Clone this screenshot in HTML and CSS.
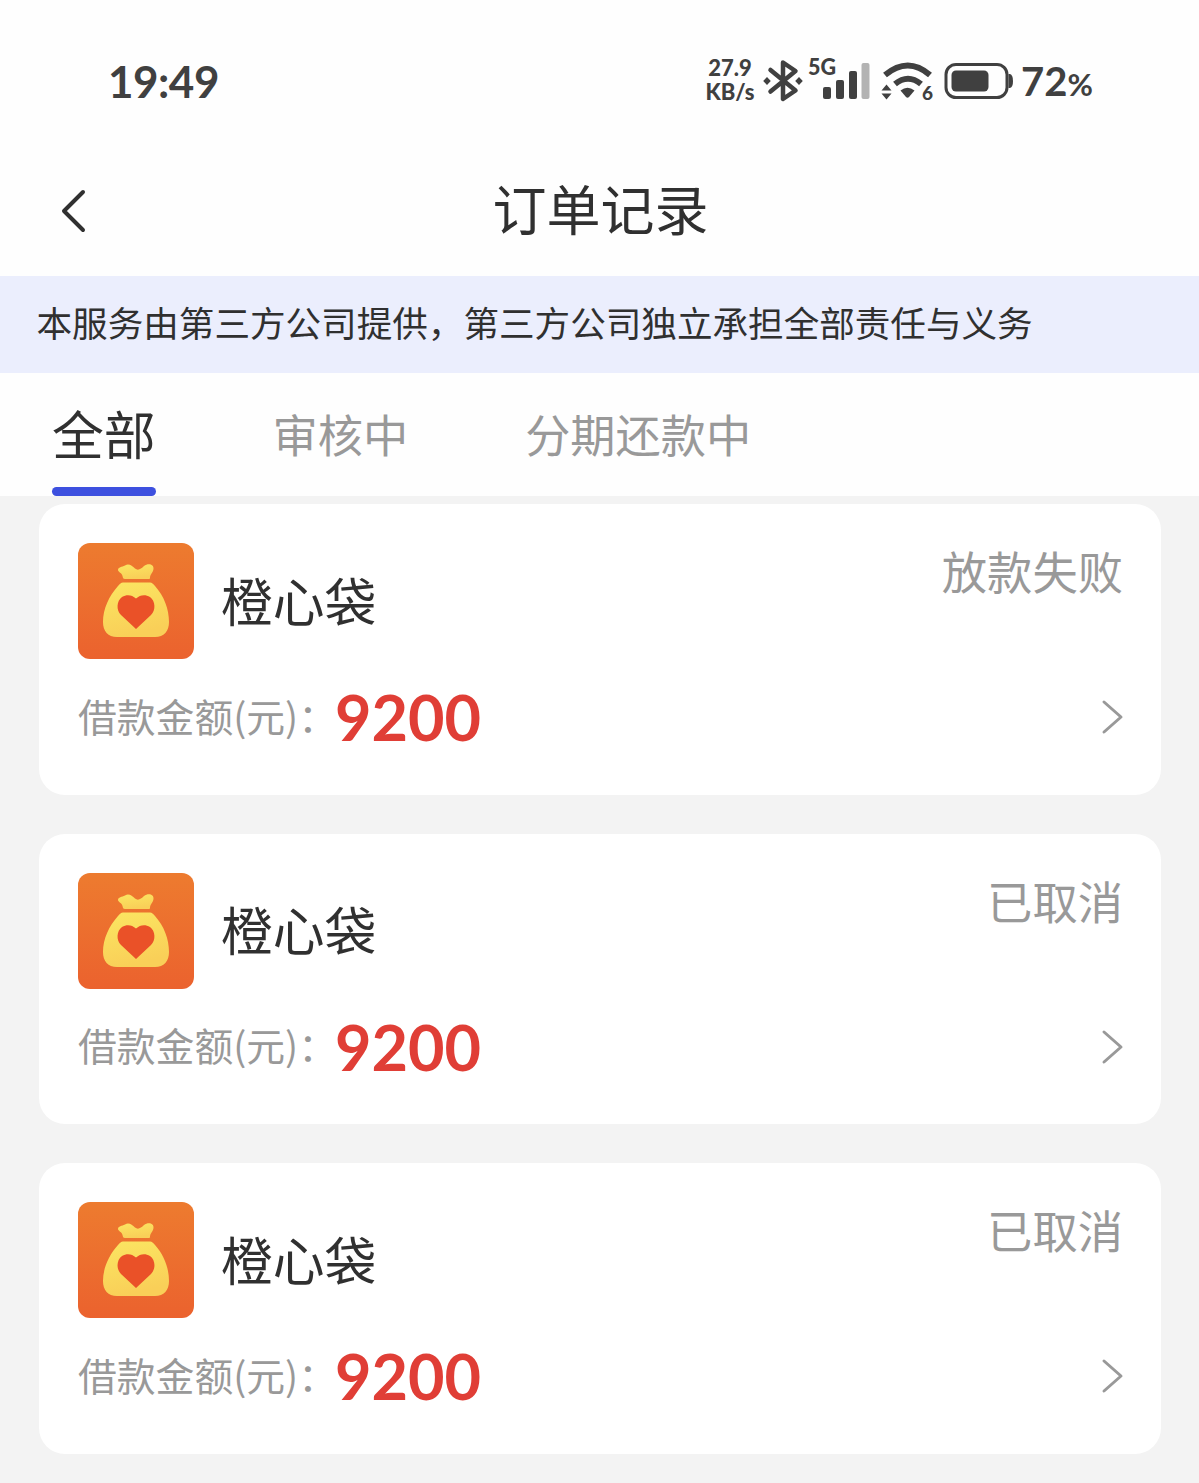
FILE: index.html
```html
<!DOCTYPE html>
<html lang="zh-CN">
<head>
  <meta charset="UTF-8">
  <meta name="viewport" content="width=device-width, initial-scale=1.0">
  <title>订单记录</title>
  <link rel="stylesheet" href="styles.css">
</head>
<body>

<!-- shared icons -->
<svg class="defs" width="0" height="0">
  <defs>
    <linearGradient id="bg" x1="0" y1="0" x2="0" y2="1">
      <stop offset="0" stop-color="#ed7b2f"/>
      <stop offset="1" stop-color="#eb622e"/>
    </linearGradient>
    <linearGradient id="gold" x1="0" y1="0" x2="0.3" y2="1">
      <stop offset="0" stop-color="#fbe662"/>
      <stop offset="1" stop-color="#f9cf58"/>
    </linearGradient>
  </defs>
  <symbol id="bag" viewBox="0 0 116 116">
    <rect width="116" height="116" rx="12" fill="url(#bg)"/>
    <path d="M40 27 C40 24 44 24 47 22.500 C51 20 54 23 57 25.500 C60 28 63 26 66 23 C70 20 76 21 75.500 26 C75 30 72 31 72 35 C72 36 71 36 70 36 H47 C45 36 45 35 44.500 33 C44 30 40 29 40 27Z" fill="url(#gold)"/>
    <path d="M45 39.500 H72 C74 39.500 75 41 77 43 C86 53 91 66 91 79 C91 88 86 94 77 94 H39 C30 94 25 88 25 79 C25 66 31 53 40 43 C42 41 43 39.500 45 39.500Z" fill="url(#gold)"/>
    <path d="M58 86 L43 72 C38 67 38.500 58 44 54 C49 51 54 52 58 55.500 C62 52 67 51 72 54 C77.500 58 78 67 73 72Z" fill="#ea5128"/>
  </symbol>
  <symbol id="arrow" viewBox="0 0 24 36">
    <path d="M4 3 L21 18 L4 33" fill="none" stroke="#999" stroke-width="3" stroke-linecap="round" stroke-linejoin="round"/>
  </symbol>
</svg>

<div class="status-bar">
  <span class="time">19:49</span>
  <div class="status-icons">
    <div class="speed"><span>27.9</span><span>KB/s</span></div>
    <svg class="bluetooth" width="40" height="44" viewBox="0 0 40 44" fill="none" stroke="#404040" stroke-width="4.500" stroke-linejoin="round" stroke-linecap="round">
      <path d="M7.500 11 L32.500 31.500 L20 40 V3.500 L32.500 12 L7.500 32.500"/>
      <path d="M4 18 L7.800 22 L4 26 L0.200 22Z M36 18 L39.800 22 L36 26 L32.200 22Z" fill="#404040" stroke="none"/>
    </svg>
    <svg class="signal" width="64" height="44" viewBox="0 0 64 44" fill="#404040">
      <text x="1" y="16" textLength="28" lengthAdjust="spacingAndGlyphs">5G</text>
      <rect x="16" y="28" width="8" height="12" rx="2"/>
      <rect x="29" y="21" width="8" height="19" rx="2"/>
      <rect x="42" y="12" width="8" height="28" rx="2"/>
      <rect x="54.500" y="4" width="8" height="36" rx="2" fill="#b3b3b3"/>
    </svg>
    <svg class="wifi" width="52" height="44" viewBox="0 0 52 44" fill="#404040">
      <path d="M4 16 Q27 -3 49 16" fill="none" stroke="#404040" stroke-width="6"/>
      <path d="M14 25 Q27 14.500 40 25" fill="none" stroke="#404040" stroke-width="6"/>
      <path d="M19.500 31.500 Q26.500 26 33.500 31.500 L28 38 Q26.500 39.500 25 38Z"/>
      <path d="M0.500 31.500 L5.500 25.500 L10.500 31.500Z M0.500 34.500 H10.500 L5.500 40.500Z"/>
      <text x="41" y="41">6</text>
    </svg>
    <svg class="battery" width="70" height="40" viewBox="0 0 70 40">
      <rect x="2" y="3.500" width="61" height="33" rx="10" fill="none" stroke="#404040" stroke-width="3"/>
      <rect x="7.500" y="9.500" width="37" height="21" rx="4.500" fill="#404040"/>
      <path d="M64.500 13 H66 Q69 14 69 20 Q69 26 66 27 H64.500Z" fill="#404040"/>
    </svg>
    <span class="percent">72<small>%</small></span>
  </div>
</div>

<header>
  <svg class="back" width="30" height="44" viewBox="0 0 30 44">
    <path d="M24 3 L5 22 L24 41" fill="none" stroke="#303030" stroke-width="4" stroke-linecap="round" stroke-linejoin="round"/>
  </svg>
  <h1>订单记录</h1>
</header>

<div class="notice">本服务由第三方公司提供，第三方公司独立承担全部责任与义务</div>

<nav>
  <a class="active">全部</a>
  <a>审核中</a>
  <a>分期还款中</a>
</nav>

<main>
  <div class="card">
    <div class="card-top">
      <svg class="logo"><use href="#bag"/></svg>
      <h2>橙心袋</h2>
      <span class="state">放款失败</span>
    </div>
    <div class="card-bottom">
      <span class="label">借款金额(元)：</span>
      <span class="amount">9200</span>
      <svg class="arrow"><use href="#arrow"/></svg>
    </div>
  </div>

  <div class="card">
    <div class="card-top">
      <svg class="logo"><use href="#bag"/></svg>
      <h2>橙心袋</h2>
      <span class="state">已取消</span>
    </div>
    <div class="card-bottom">
      <span class="label">借款金额(元)：</span>
      <span class="amount">9200</span>
      <svg class="arrow"><use href="#arrow"/></svg>
    </div>
  </div>

  <div class="card">
    <div class="card-top">
      <svg class="logo"><use href="#bag"/></svg>
      <h2>橙心袋</h2>
      <span class="state">已取消</span>
    </div>
    <div class="card-bottom">
      <span class="label">借款金额(元)：</span>
      <span class="amount">9200</span>
      <svg class="arrow"><use href="#arrow"/></svg>
    </div>
  </div>
</main>

</body>
</html>
```
FILE: styles.css
```css
:root {
  --text-color: #303030;
  --muted-color: #999;
  --status-color: #404040;
  --primary-color: #3d50df;
  --amount-color: #e03e36;
}
* { box-sizing: border-box; }
body {
  font-family: 'Noto Sans CJK SC', sans-serif;
  margin: 0;
  height: 1483px;
  overflow: hidden;
  background-color: #f3f3f3;
  color: var(--text-color);
}
svg { display: block; flex: none; overflow: visible; }
.defs { position: absolute; }

/* status bar */
.status-bar {
  height: 144px;
  padding: 18px 106px 0 108px;
  background-color: #fefefe;
  color: var(--status-color);
  font-family: Lato, sans-serif;
  font-weight: 700;
  display: flex;
  justify-content: space-between;
  align-items: center;
  white-space: nowrap;
}
.time { font-size: 44px; letter-spacing: -0.5px; }
.status-icons {
  display: flex;
  align-items: center;
}
.speed {
  width: 50px;
  margin-right: 8px;
  padding-bottom: 2px;
  font-size: 22px;
  line-height: 24px;
  font-weight: 900;
  display: flex;
  flex-direction: column;
  align-items: center;
}
.signal { margin-left: 4px; }
.signal text { font-size: 22px; font-weight: 900; }
.wifi { margin-left: 10px; }
.wifi text { font-size: 19px; font-weight: 900; }
.battery { margin-left: 11px; }
.percent { width: 72px; margin-left: 7px; font-size: 40px; }
.percent small { font-size: 31px; }

header {
  height: 132px;
  padding: 0 58px;
  background-color: #fefefe;
  display: grid;
  grid-template-columns: 30px 1fr 30px;
  align-items: center;
}
.back { margin: 1px 0 0 1px; }
h1 {
  margin: 0;
  padding: 0 0 5px 2px;
  font-size: 54px;
  line-height: 60px;
  font-weight: 400;
  text-align: center;
}

.notice {
  height: 97px;
  padding-left: 36.5px;
  background-color: #ebeefd;
  font-size: 35.6px;
  line-height: 92px;
  white-space: nowrap;
}

nav {
  height: 123px;
  padding-left: 52px;
  background-color: #fefefe;
  display: flex;
  gap: 117px;
}
nav a {
  height: 123px;
  color: var(--muted-color);
  font-size: 45.2px;
  line-height: 121px;
}
nav a.active {
  color: var(--text-color);
  font-size: 51.8px;
  line-height: 119px;
}
nav a.active::after {
  content: '';
  display: block;
  height: 9px;
  margin-top: -5px;
  border-radius: 4.5px;
  background-color: var(--primary-color);
}

/* order cards */
main {
  padding: 8px 38px 0 39px;
  display: grid;
  gap: 39px;
}
.card {
  height: 290.5px;
  padding: 39px 38px 0 39px;
  border-radius: 26px;
  background-color: #fff;
}
.card-top {
  height: 116px;
  display: flex;
  align-items: center;
}
.logo { width: 116px; height: 116px; }
h2 {
  margin: 0 0 0 27px;
  padding-bottom: 3px;
  font-size: 51.8px;
  line-height: 60px;
  font-weight: 400;
}
.state {
  align-self: flex-start;
  margin-left: auto;
  color: var(--muted-color);
  font-size: 45.3px;
  line-height: 54px;
}
.card-bottom {
  height: 116px;
  display: flex;
  align-items: center;
}
.label {
  width: 257px;
  padding-bottom: 5px;
  color: var(--muted-color);
  font-size: 38.8px;
  line-height: 50px;
  white-space: nowrap;
}
.amount {
  padding-bottom: 1px;
  color: var(--amount-color);
  font-family: Lato, sans-serif;
  font-size: 63px;
  font-weight: 700;
}
.arrow {
  width: 24px;
  height: 36px;
  margin: 0 -1px 0 auto;
}
```
